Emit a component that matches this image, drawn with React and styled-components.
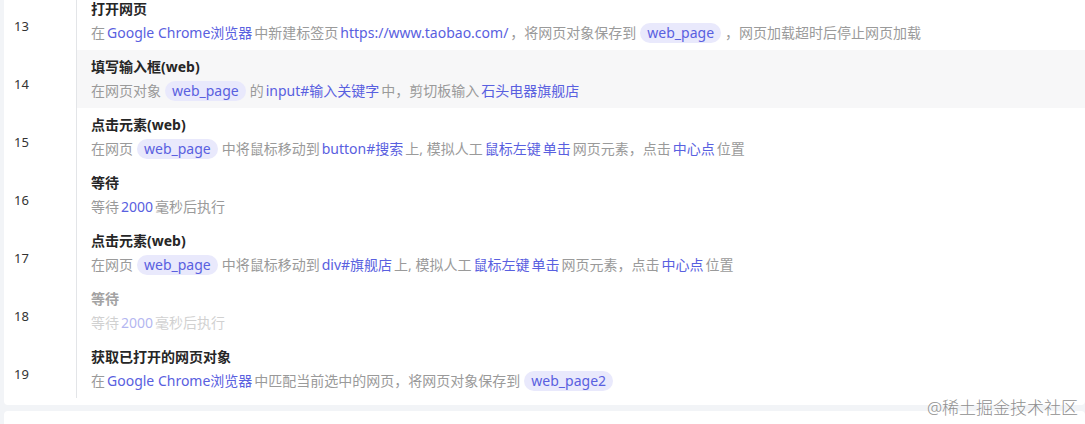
import React from "react";
import styled, { createGlobalStyle } from "styled-components";

const GlobalStyle = createGlobalStyle`
  html, body {
    margin: 0;
    padding: 0;
    background: #f2f4f7;
    font-family: "Noto Sans", "Noto Sans CJK SC", sans-serif;
    overflow: hidden;
  }
`;

// each step: title + description parts. type: t = text, l = link, c = chip
const steps = [
  {
    no: 13,
    title: "打开网页",
    desc: [
      ["t", "在"],
      ["l", "Google Chrome浏览器"],
      ["t", "中新建标签页"],
      ["l", "https://www.taobao.com/"],
      ["t", "，将网页对象保存到"],
      ["c", "web_page"],
      ["t", "，网页加载超时后停止网页加载"],
    ],
  },
  {
    no: 14,
    title: "填写输入框(web)",
    active: true,
    desc: [
      ["t", "在网页对象"],
      ["c", "web_page"],
      ["t", "的"],
      ["l", "input#输入关键字"],
      ["t", "中，剪切板输入"],
      ["l", "石头电器旗舰店"],
    ],
  },
  {
    no: 15,
    title: "点击元素(web)",
    desc: [
      ["t", "在网页"],
      ["c", "web_page"],
      ["t", "中将鼠标移动到"],
      ["l", "button#搜索"],
      ["t", "上, 模拟人工"],
      ["l", "鼠标左键"],
      ["l", "单击"],
      ["t", "网页元素，点击"],
      ["l", "中心点"],
      ["t", "位置"],
    ],
  },
  {
    no: 16,
    title: "等待",
    desc: [
      ["t", "等待"],
      ["l", "2000"],
      ["t", "毫秒后执行"],
    ],
  },
  {
    no: 17,
    title: "点击元素(web)",
    desc: [
      ["t", "在网页"],
      ["c", "web_page"],
      ["t", "中将鼠标移动到"],
      ["l", "div#旗舰店"],
      ["t", "上, 模拟人工"],
      ["l", "鼠标左键"],
      ["l", "单击"],
      ["t", "网页元素，点击"],
      ["l", "中心点"],
      ["t", "位置"],
    ],
  },
  {
    no: 18,
    title: "等待",
    disabled: true,
    desc: [
      ["t", "等待"],
      ["l", "2000"],
      ["t", "毫秒后执行"],
    ],
  },
  {
    no: 19,
    title: "获取已打开的网页对象",
    desc: [
      ["t", "在"],
      ["l", "Google Chrome浏览器"],
      ["t", "中匹配当前选中的网页，将网页对象保存到"],
      ["c", "web_page2"],
    ],
  },
];

const App = () => {
  return (
    <Page>
      <GlobalStyle />
      <Card>
        <List>
          {steps.map((s) => (
            <Row key={s.no}>
              <NumCell>{s.no}</NumCell>
              <Content $active={s.active}>
                <Title $disabled={s.disabled}>{s.title}</Title>
                <Desc $disabled={s.disabled}>
                  {s.desc.map(([type, text], i) => {
                    if (type === "l") return <Link key={i}>{text}</Link>;
                    if (type === "c") return <Chip key={i}>{text}</Chip>;
                    return <span key={i}>{text}</span>;
                  })}
                </Desc>
              </Content>
            </Row>
          ))}
        </List>
      </Card>
      <NextCard />
      <Watermark>@稀土掘金技术社区</Watermark>
    </Page>
  );
};

const Page = styled.div`
  position: relative;
  width: 1085px;
  height: 424px;
  padding-left: 4px;
  box-sizing: border-box;
  display: flex;
  flex-direction: column;
  gap: 6px;
`;

const Card = styled.div`
  background: #fff;
  border-radius: 0 0 4px 4px;
  padding-bottom: 7px;
  margin-top: -8px;
`;

const List = styled.div`
  display: flex;
  flex-direction: column;
`;

const Row = styled.div`
  display: flex;
  height: 58px;
`;

const NumCell = styled.div`
  width: 73px;
  flex-shrink: 0;
  box-sizing: border-box;
  border-right: 1px solid #e3e5e8;
  padding: 24px 0 0 10px;
  font-size: 13px;
  line-height: 20px;
  color: #333;
`;

const Content = styled.div`
  flex: 1;
  padding: 7px 0 0 14px;
  background: ${(p) => (p.$active ? "#f7f7f8" : "transparent")};
`;

const Title = styled.div`
  font-size: 14px;
  font-weight: 700;
  line-height: 20px;
  color: ${(p) => (p.$disabled ? "#a3a3a3" : "#262626")};
`;

const Desc = styled.div`
  margin-top: 2px;
  font-size: 14px;
  line-height: 24px;
  color: #9a9a9a;
  display: flex;
  align-items: center;
  white-space: nowrap;
  gap: 2px;
  opacity: ${(p) => (p.$disabled ? 0.45 : 1)};
`;

const Link = styled.span`
  color: #5960e0;
`;

const Chip = styled.span`
  color: #5960e0;
  background: #e9e9fc;
  border-radius: 10px;
  padding: 0 7px;
  line-height: 20px;
  height: 20px;
  margin: 0 2px;
`;

const NextCard = styled.div`
  flex: 1;
  background: #fff;
  border-radius: 4px 4px 0 0;
`;

const Watermark = styled.div`
  position: absolute;
  right: 7px;
  bottom: 5px;
  font-size: 17px;
  color: #8f8f8f;
  font-weight: 300;
  text-shadow: 0 0 2px #fff;
`;

export default App;
